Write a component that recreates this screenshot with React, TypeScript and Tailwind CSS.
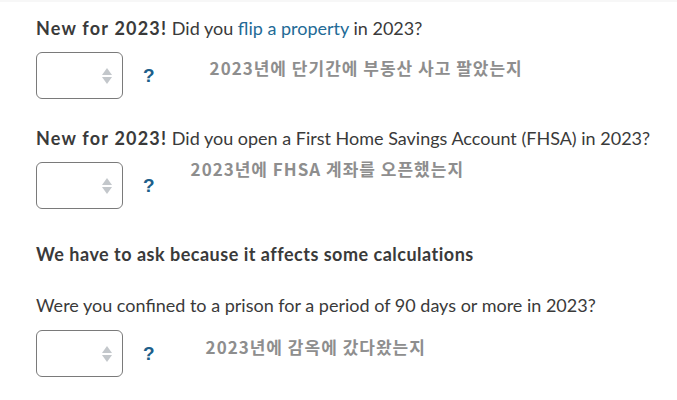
import React from "react";

const kr = "font-['Noto_Sans_CJK_KR',sans-serif] font-bold text-[17px] tracking-[1px] text-[#8e8e8e] leading-none";

function Picker() {
  return (
    <div className="w-[87px] h-[47px] rounded-[6px] border border-[#7a7a7a] bg-white flex items-center justify-end pr-[10px]">
      <svg width="10" height="16" viewBox="0 0 10 16">
        <path d="M5 0 L10 7 L0 7 Z" fill="#c3c7cb" />
        <path d="M0 9 L10 9 L5 16 Z" fill="#c3c7cb" />
      </svg>
    </div>
  );
}

function AnswerRow({ note, noteX, noteY }: { note: string; noteX: string; noteY: string }) {
  return (
    <div className="flex items-start">
      <Picker />
      <span className="ml-[20px] mt-[14px] text-[19px] font-black text-[#1d5f8a] leading-none font-['Liberation_Sans',sans-serif]">?</span>
      <span className={`${kr} ${noteX} ${noteY}`}>{note}</span>
    </div>
  );
}

export default function App() {
  return (
    <div className="min-h-[400px] w-[677px] bg-white border-t-2 border-[#f7f7f7] font-['Lato',sans-serif] text-[#3a3a3a]">
      <div className="pl-[36px] pt-[14px]">
        <p className="text-[18px] leading-[24px]">
          <span className="font-bold tracking-[1.2px]">New for 2023!</span> Did you{" "}
          <span className="text-[#236a96]">flip a property</span> in 2023?
        </p>
        <div className="mt-[12px]">
          <AnswerRow note="2023년에 단기간에 부동산 사고 팔았는지" noteX="ml-[55px]" noteY="mt-[7px]" />
        </div>

        <p className="mt-[27px] text-[18px] leading-[24px]">
          <span className="font-bold tracking-[1.2px]">New for 2023!</span> Did you open a First Home Savings Account (FHSA) in 2023?
        </p>
        <div className="mt-[12px]">
          <AnswerRow note="2023년에 FHSA 계좌를 오픈했는지" noteX="ml-[36px]" noteY="-mt-[2px]" />
        </div>

        <p className="mt-[33px] text-[18px] leading-[24px] font-bold tracking-[0.5px]">We have to ask because it affects some calculations</p>

        <p className="mt-[27px] text-[18px] leading-[24px]">
          Were you confined to a prison for a period of 90 days or more in 2023?
        </p>
        <div className="mt-[13px]">
          <AnswerRow note="2023년에 감옥에 갔다왔는지" noteX="ml-[51px]" noteY="mt-[8px]" />
        </div>
      </div>
    </div>
  );
}
